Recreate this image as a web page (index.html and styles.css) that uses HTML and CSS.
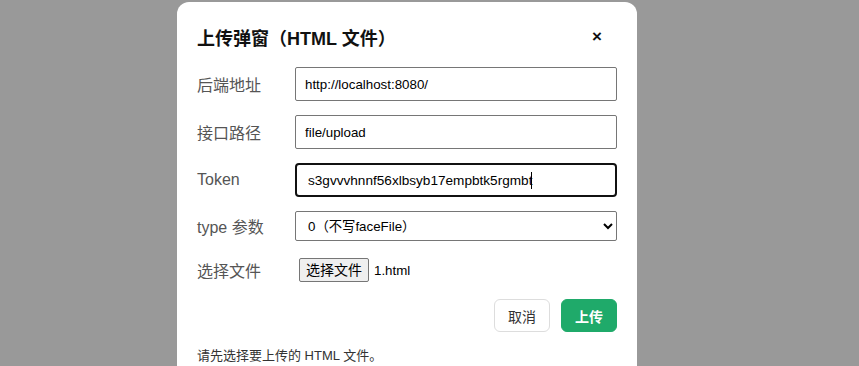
FILE: index.html
```html
<!DOCTYPE html>
<html lang="zh-CN">
<head>
  <meta charset="UTF-8" />
  <meta name="viewport" content="width=device-width, initial-scale=1" />
  <title>上传弹窗</title>
  <link rel="stylesheet" href="styles.css">
</head>
<body>
  <div class="overlay">
    <div class="modal">
      <div class="modal-head">
        <h2>上传弹窗（HTML 文件）</h2>
        <button class="close-btn" type="button">×</button>
      </div>

      <div class="form-grid">
        <label for="baseUrl">后端地址</label>
        <input type="text" id="baseUrl" class="text-input" value="http://localhost:8080/" />

        <label for="apiPath">接口路径</label>
        <input type="text" id="apiPath" class="text-input" value="file/upload" />

        <label for="token">Token</label>
        <div class="focus-wrap">
          <input type="text" id="token" class="text-input is-focused" value="s3gvvvhnnf56xlbsyb17empbtk5rgmbt" /><span class="caret"></span>
        </div>

        <label for="typeParam">type 参数</label>
        <select id="typeParam" class="select-input">
          <option>0（不写faceFile）</option>
          <option>1（写faceFile）</option>
        </select>

        <label>选择文件</label>
        <div class="file-row">
          <span class="file-btn">选择文件</span>
          <span class="file-name">1.html</span>
        </div>
      </div>

      <div class="actions">
        <button class="btn btn-cancel" type="button">取消</button>
        <button class="btn btn-primary" type="button">上传</button>
      </div>

      <p class="status">请先选择要上传的 HTML 文件。</p>
    </div>
  </div>
</body>
</html>
```

FILE: styles.css
```css
* {
  box-sizing: border-box;
}

body {
  margin: 0;
  font-family: 'Liberation Sans', 'Noto Sans CJK SC', sans-serif;
  background: #999;
  height: 366px;
  overflow: hidden;
}

.overlay {
  padding-top: 2px;
  padding-left: 177px;
}

.modal {
  width: 460px;
  height: 364px;
  background: #fff;
  border-radius: 12px 12px 0 0;
  padding: 20px;
}

.modal-head {
  display: flex;
  justify-content: space-between;
  align-items: center;
  height: 30px;
  margin-bottom: 15px;
}

.modal-head h2 {
  margin: 0;
  font-size: 18px;
  font-weight: bold;
  color: #111;
}

.close-btn {
  width: 30px;
  height: 30px;
  margin-right: 5px;
  border: none;
  background: none;
  font-size: 17px;
  font-weight: bold;
  color: #111;
  cursor: pointer;
  padding: 0;
  font-family: 'Liberation Sans', sans-serif;
}

.form-grid {
  display: grid;
  grid-template-columns: 90px 1fr;
  column-gap: 8px;
  row-gap: 14px;
  align-items: center;
}

.form-grid label {
  font-size: 16px;
  color: #555;
}

.text-input {
  width: 100%;
  height: 34px;
  padding: 0 9px;
  font-size: 13.33px;
  font-family: inherit;
  color: #000;
  border: 1px solid #767676;
  border-radius: 2px;
  outline: none;
}

.focus-wrap {
  position: relative;
}

.text-input.is-focused {
  border: 2px solid #111;
  border-radius: 4px;
  padding: 0 11px;
  font-size: 13.6px;
}

.caret {
  position: absolute;
  left: 236px;
  top: 9px;
  width: 1px;
  height: 17px;
  background: #000;
}

.select-input {
  width: 100%;
  height: 30px;
  font-size: 13.33px;
  font-family: inherit;
  color: #000;
  padding: 0 8px;
  border: 1px solid #767676;
  border-radius: 2px;
  background: #fff;
}

.file-row {
  display: flex;
  align-items: center;
  height: 30px;
  padding-left: 4px;
  font-size: 13.33px;
}

.file-btn {
  display: inline-block;
  height: 24px;
  line-height: 22px;
  padding: 0 6px;
  font-size: 14px;
  background: #efefef;
  border: 1px solid #767676;
  border-radius: 2px;
  color: #000;
}

.file-name {
  margin-left: 5px;
  color: #000;
}

.actions {
  display: flex;
  justify-content: flex-end;
  gap: 11px;
  margin-top: 14px;
}

.btn {
  height: 33px;
  padding: 0 13px;
  font-size: 14px;
  font-family: inherit;
  border-radius: 6px;
  cursor: pointer;
}

.btn-cancel {
  background: #fff;
  border: 1px solid #ddd;
  color: #333;
}

.btn-primary {
  background: #1faa6a;
  border: 1px solid #1faa6a;
  color: #fff;
  font-weight: bold;
}

.status {
  margin: 13px 0 0;
  font-size: 13px;
  color: #333;
}
```
